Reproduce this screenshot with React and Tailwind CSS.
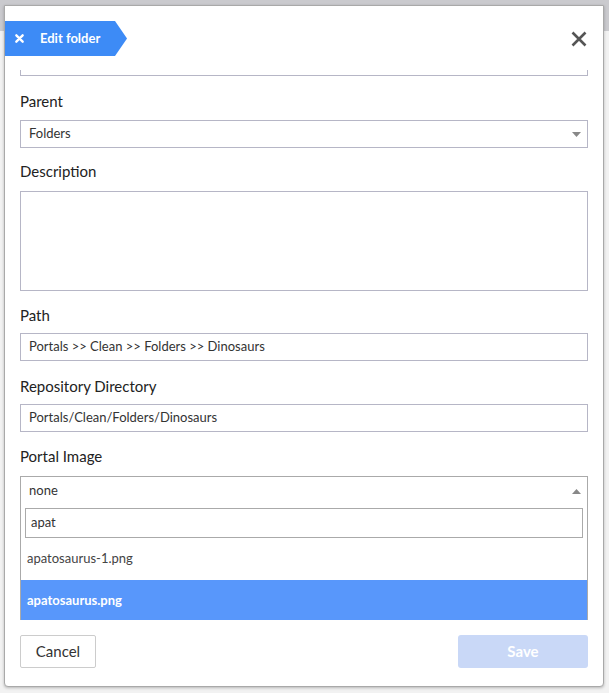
import React from 'react';

const font = { fontFamily: 'Lato, "Noto Sans", sans-serif' };

const Label = ({ children, className = '' }) => (
  <div className={`text-[15px] leading-[18px] text-[#222] ${className}`}>{children}</div>
);

const TextInput = ({ value, className = '' }) => (
  <div className={`h-[28px] border border-[#b6b6c6] bg-white px-[8px] flex items-center text-[13px] text-[#333] ${className}`}>
    {value}
  </div>
);

const EditFolderModal = () => {
  return (
    <div className="absolute left-[4px] top-[5px] w-[600px] h-[682px] bg-white border border-[#a9a9a9] rounded-b-[4px] shadow-[0_1px_3px_rgba(0,0,0,0.25)] flex flex-col">
      {/* Header */}
      <div className="h-[64px] flex items-start justify-between pt-[15px] shrink-0">
        <div className="h-[35px] w-[122px] bg-[#3d8bf6] text-white flex items-center [clip-path:polygon(0_0,110px_0,122px_50%,110px_100%,0_100%)]">
          <svg className="ml-[10px] w-[9px] h-[9px]" viewBox="0 0 10 10">
            <path d="M1.5 1.5l7 7M8.5 1.5l-7 7" stroke="white" strokeWidth="2.6" strokeLinecap="round" />
          </svg>
          <span className="ml-[16px] text-[13px] font-bold">Edit folder</span>
        </div>
        <button className="h-[35px] mr-[16px] flex items-center">
          <svg className="w-[16px] h-[16px]" viewBox="0 0 16 16">
            <path d="M1.5 1.5l13 13M14.5 1.5l-13 13" stroke="#555" strokeWidth="2.6" />
          </svg>
        </button>
      </div>

      {/* Body */}
      <div className="flex-1 overflow-hidden px-[15px]">
        <div className="h-[6px] border-x border-b border-[#b6b6c6]" />

        <Label className="mt-[16px]">Parent</Label>
        <div className="mt-[10px] h-[28px] border border-[#b6b6c6] bg-white pl-[8px] pr-[6px] flex items-center justify-between text-[13px] text-[#333]">
          <span>Folders</span>
          <svg className="w-[9px] h-[5px]" viewBox="0 0 9 5"><path d="M0 0h9L4.5 5z" fill="#888" /></svg>
        </div>

        <Label className="mt-[14px]">Description</Label>
        <div className="mt-[11px] h-[100px] border border-[#b6b6c6] bg-white" />

        <Label className="mt-[15px]">Path</Label>
        <TextInput className="mt-[9px]" value="Portals >> Clean >> Folders >> Dinosaurs" />

        <Label className="mt-[16px]">Repository Directory</Label>
        <TextInput className="mt-[9px]" value="Portals/Clean/Folders/Dinosaurs" />

        <Label className="mt-[15px]">Portal Image</Label>
        <div className="mt-[11px] border border-[#aaa] bg-white">
          <div className="h-[28px] pl-[8px] pr-[6px] flex items-center justify-between text-[13px] text-[#333]">
            <span>none</span>
            <svg className="w-[9px] h-[5px]" viewBox="0 0 9 5"><path d="M4.5 0L9 5H0z" fill="#888" /></svg>
          </div>
          <div className="px-[4px] pt-[3px]">
            <div className="h-[30px] border border-[#aaa] px-[5px] flex items-center text-[13px] text-[#333]">apat</div>
          </div>
          <div className="h-[42px] px-[6px] flex items-center text-[13px] text-[#444]">apatosaurus-1.png</div>
          <div className="h-[42px] px-[6px] flex items-center text-[13px] font-bold text-white bg-[#5897fb]">apatosaurus.png</div>
        </div>
      </div>

      {/* Footer */}
      <div className="h-[66px] shrink-0 px-[15px] pt-[15px] flex items-start justify-between">
        <button className="h-[33px] w-[76px] border border-[#ccc] rounded-[2px] bg-white text-[15px] text-[#333]">Cancel</button>
        <button className="h-[33px] w-[130px] rounded-[3px] bg-[#c9d8f7] text-[15px] font-bold text-white">Save</button>
      </div>
    </div>
  );
};

export default function App() {
  return (
    <div className="relative w-[609px] h-[693px] overflow-hidden bg-[#f2f2f2]" style={font}>
      <div className="h-[31px] bg-[#cacace]" />
      <EditFolderModal />
    </div>
  );
}
